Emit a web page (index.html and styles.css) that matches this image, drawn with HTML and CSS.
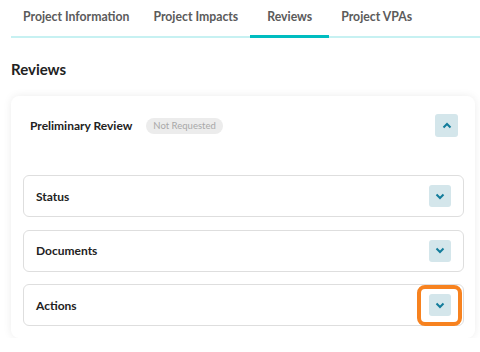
FILE: index.html
```html
<!DOCTYPE html>
<html lang="en">
<head>
    <meta charset="UTF-8">
    <meta name="viewport" content="width=device-width, initial-scale=1.0">
    <title>Reviews</title>
    <link rel="stylesheet" href="styles.css">
</head>
<body>
    <div class="tabs">
        <div class="tab">Project Information</div>
        <div class="tab">Project Impacts</div>
        <div class="tab active">Reviews</div>
        <div class="tab">Project VPAs</div>
    </div>

    <div class="content">
        <h2>Reviews</h2>

        <div class="card">
            <div class="card-head">
                <span class="card-title">Preliminary Review</span>
                <span class="badge">Not Requested</span>
                <button class="toggle" title="Collapse">
                    <svg width="10" height="7" viewBox="0 0 10 7"><path d="M1.5 5.5 L5 2 L8.5 5.5" fill="none" stroke="#137c9b" stroke-width="2"/></svg>
                </button>
            </div>

            <div class="subs">
                <div class="sub">
                    <span>Status</span>
                    <button class="toggle" title="Expand">
                        <svg width="10" height="7" viewBox="0 0 10 7"><path d="M1.5 1.5 L5 5 L8.5 1.5" fill="none" stroke="#137c9b" stroke-width="2"/></svg>
                    </button>
                </div>
                <div class="sub">
                    <span>Documents</span>
                    <button class="toggle" title="Expand">
                        <svg width="10" height="7" viewBox="0 0 10 7"><path d="M1.5 1.5 L5 5 L8.5 1.5" fill="none" stroke="#137c9b" stroke-width="2"/></svg>
                    </button>
                </div>
                <div class="sub">
                    <span>Actions</span>
                    <button class="toggle marked" title="Expand">
                        <svg width="10" height="7" viewBox="0 0 10 7"><path d="M1.5 1.5 L5 5 L8.5 1.5" fill="none" stroke="#137c9b" stroke-width="2"/></svg>
                    </button>
                </div>
            </div>
        </div>
    </div>
</body>
</html>
```
FILE: styles.css
```css
body {
    font-family: Lato, "Liberation Sans", sans-serif;
    margin: 0;
    padding-left: 11px;
    background: #fff;
    color: #222;
}
.tabs {
    display: flex;
    height: 36px;
    border-bottom: 2px solid #c7f1f2;
}
.tab {
    padding: 0 12px 3px;
    line-height: 33px;
    font-size: 12.25px;
    font-weight: bold;
    color: #5b5b5b;
}
.tab.active {
    min-width: 55px;
    text-align: center;
    border-bottom: 3px solid #00bdc0;
    margin-bottom: -2px;
    height: 32px;
}
.content {
    margin-right: 5px;
}
h2 {
    font-size: 15px;
    line-height: 20px;
    margin: 21px 0 17px;
    font-weight: bold;
    color: #222;
}
.card {
    background: #fff;
    border-radius: 8px;
    box-shadow: 0 0 8px rgba(0, 0, 0, 0.08);
    padding: 18px 11px 12px 12px;
}
.card-head {
    display: flex;
    align-items: center;
    height: 23px;
    padding: 0 6px 0 7px;
    margin-bottom: 38px;
}
.card-title {
    font-size: 12px;
    font-weight: bold;
}
.badge {
    margin-left: 14px;
    height: 16px;
    line-height: 16px;
    padding: 0 7px;
    border-radius: 8px;
    background: #ececec;
    color: #a8a8a8;
    font-size: 9.5px;
}
.card-head .toggle {
    margin-left: auto;
    width: 23px;
    height: 23px;
}
.subs {
    display: flex;
    flex-direction: column;
    gap: 12.5px;
}
.sub {
    display: flex;
    align-items: center;
    justify-content: space-between;
    height: 40px;
    border: 1px solid #dedede;
    border-radius: 6px;
    padding: 0 12px;
    font-size: 12px;
    font-weight: bold;
}
.toggle {
    position: relative;
    width: 22px;
    height: 22px;
    border: none;
    border-radius: 3px;
    background: #d4e6eb;
    padding: 0;
    display: flex;
    align-items: center;
    justify-content: center;
}
.marked::after {
    content: '';
    position: absolute;
    left: -12px;
    right: -11px;
    top: -9px;
    bottom: -10px;
    border: 4px solid #f7821f;
    border-radius: 8px;
}
```
